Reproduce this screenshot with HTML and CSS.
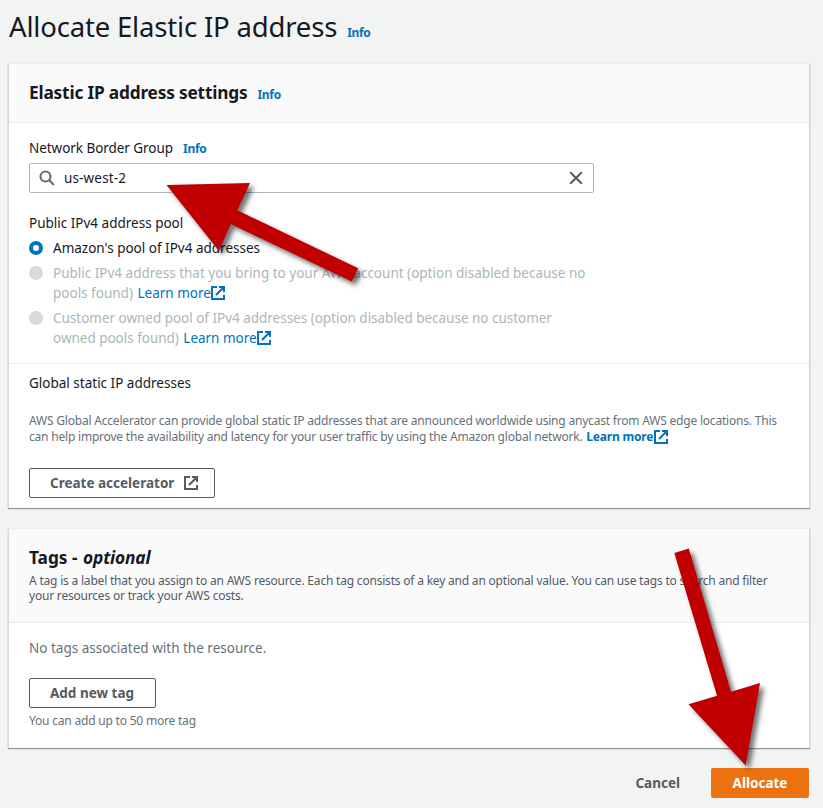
FILE: index.html
```
<!DOCTYPE html>
<html lang="en">
<head>
<meta charset="utf-8">
<title>Allocate Elastic IP address</title>
<link rel="stylesheet" href="styles.css">
</head>
<body>
<svg class="defs" width="0" height="0" aria-hidden="true">
  <symbol id="external" viewBox="0 0 14 14">
    <path d="M6 1H1v12h12V9M8 1h5v5M12.5 1.5 5 9" fill="none" stroke="currentColor" stroke-width="2"/>
  </symbol>
</svg>
<main class="page">
  <header class="page-header">
    <h1>Allocate Elastic IP address</h1><a class="info">Info</a>
  </header>

  <section class="card">
    <header class="card-header settings-header">
      <h2 class="settings-title">Elastic IP address settings</h2><a class="info">Info</a>
    </header>
    <div class="settings-body">
      <div class="field-label"><span>Network Border Group</span><a class="info">Info</a></div>
      <div class="search-box">
        <svg class="search-icon" viewBox="0 0 16 16"><circle cx="6.5" cy="6.5" r="5" /><path d="M10 10l5 5"/></svg>
        <span class="search-value">us-west-2</span>
        <svg class="clear-icon" viewBox="0 0 14 14"><path d="M1.2 1.2l11.6 11.6M12.8 1.2 1.2 12.8"/></svg>
      </div>
      <div class="pool-label">Public IPv4 address pool</div>
      <div class="radio-row"><span class="radio checked"></span><div>Amazon's pool of IPv4 addresses</div></div>
      <div class="radio-row disabled"><span class="radio"></span><div>Public IPv4 address that you bring to your AWS account (option disabled because no<br>pools found) <a class="link">Learn more<svg class="ext"><use href="#external"/></svg></a></div></div>
      <div class="radio-row disabled"><span class="radio"></span><div class="customer-pool">Customer owned pool of IPv4 addresses (option disabled because no customer<br>owned pools found) <a class="link">Learn more<svg class="ext"><use href="#external"/></svg></a></div></div>
    </div>
    <div class="global">
      <div class="global-title">Global static IP addresses</div>
      <p class="small global-text">AWS Global Accelerator can provide global static IP addresses that are announced worldwide using anycast from AWS edge locations. This<br>can help improve the availability and latency for your user traffic by using the Amazon global network. <a class="link bold">Learn more<svg class="ext"><use href="#external"/></svg></a></p>
      <button class="button accelerator"><span>Create accelerator</span><svg class="ext"><use href="#external"/></svg></button>
    </div>
  </section>

  <section class="card tags">
    <header class="card-header tags-header">
      <h2>Tags - <em>optional</em></h2>
      <p class="small tags-text">A tag is a label that you assign to an AWS resource. Each tag consists of a key and an optional value. You can use tags to search and filter<br>your resources or track your AWS costs.</p>
    </header>
    <div class="tags-body">
      <p class="no-tags">No tags associated with the resource.</p>
      <button class="button add-tag"><span>Add new tag</span></button>
      <p class="small tag-limit">You can add up to 50 more tag</p>
    </div>
  </section>

  <footer class="actions">
    <button class="cancel">Cancel</button>
    <button class="allocate">Allocate</button>
  </footer>
</main>
<svg class="arrows" viewBox="0 0 823 808" aria-hidden="true">
  <path d="M166.5 185 250 183 237.3 210.3 358.2 268.3 351.7 281.5 230.7 224 219 251Z"/>
  <path d="M674.3 553 688.8 548.6 731 691.7 760 683 745.7 765.5 688.5 704.2 717 695.7Z"/>
</svg>
</body>
</html>
```
FILE: styles.css
```
* { box-sizing: border-box; }
body {
  margin: 0;
  background: #f2f3f3;
  color: #16191f;
  font: 13.5px/20px "Noto Sans", "Open Sans", sans-serif;
}
h1, h2, p { margin: 0; }
.defs { position: absolute; }
.page { width: 823px; height: 808px; padding: 9px 13px 0 8px; overflow: hidden; white-space: nowrap; }
.page-header { display: flex; align-items: baseline; height: 55px; padding-left: 1px; }
h1 { font-size: 27.5px; line-height: 36px; font-weight: 400; letter-spacing: -0.18px; }
.info { color: #0073bb; font-size: 12px; font-weight: 700; margin-left: 10px; letter-spacing: -0.3px; }
.card {
  width: 802px;
  height: 444px;
  background: #fff;
  border-left: 1px solid #d5dbdb;
  border-right: 1px solid #d0d5d6;
  box-shadow: 0 1px 1px #879596, 0 -1px 0 #eaeded;
}
.card-header { background: #fafafa; border-bottom: 1px solid #eaeded; padding: 0 20px; }
h2 { font-size: 17.3px; line-height: 22px; font-weight: 700; }
h2 em { margin-left: 1px; letter-spacing: -0.15px; }
.settings-title { letter-spacing: -0.19px; }
.settings-header { display: flex; align-items: baseline; height: 59px; padding-top: 18px; }
.settings-body { height: 240px; padding: 15px 20px 0; }
.field-label { display: flex; align-items: baseline; height: 20px; letter-spacing: -0.05px; }
.search-box { display: flex; align-items: center; width: 565px; height: 30px; margin-top: 5px; padding: 0 10px 0 9px; border: 1px solid #aab7b8; border-radius: 2px; }
.search-icon { width: 16px; height: 16px; }
.search-icon *, .clear-icon * { fill: none; stroke: #687078; stroke-width: 2.2; }
.clear-icon * { stroke: #545b64; stroke-width: 2; }
.search-value { flex: 1; margin-left: 9px; letter-spacing: 0.15px; }
.clear-icon { width: 14px; height: 14px; }
.pool-label { margin: 20px 0 5px; }
.radio-row { display: flex; margin-bottom: 5px; }
.radio { width: 14px; height: 14px; margin: 3px 10px 0 0; border-radius: 50%; background: #d5dbdb; }
.radio.checked { background: #fff; border: 4px solid #0073bb; }
.disabled { color: #aab7b8; }
.link { color: #0073bb; margin-left: 1px; }
.link.bold { font-weight: 700; }
.customer-pool { letter-spacing: -0.02px; }
.ext { flex: none; width: 14px; height: 14px; vertical-align: -2px; margin-left: 0; }
.global { border-top: 1px solid #eaeded; padding: 9px 20px 0; }
.small { font-size: 12px; line-height: 16px; letter-spacing: -0.2px; color: #687078; }
.global-text { margin-top: 20px; }
.global-text .ext { vertical-align: -3px; margin-left: 1px; }
.button { display: flex; align-items: center; height: 30px; padding: 0 20px; border: 1px solid #545b64; border-radius: 2px; background: #fff; color: #545b64; font: inherit; font-weight: 700; }
.accelerator { width: 186px; margin-top: 23px; }
.accelerator .ext { margin-left: 10px; }
.tags { height: 219px; margin-top: 21px; }
.tags-header { height: 94px; padding-top: 18px; }
.tags-text { line-height: 15px; margin-top: 4px; color: #545b64; }
.tags-body { padding: 15px 20px 0; }
.no-tags { color: #687078; }
.add-tag { width: 127px; margin-top: 20px; }
.tag-limit { margin-top: 5px; }
.actions { display: flex; justify-content: flex-end; width: 801px; margin-top: 20px; }
.actions button { height: 30px; padding: 0 20px; border: 0; border-radius: 2px; background: none; color: #545b64; font: inherit; font-weight: 700; }
.actions .cancel { margin-right: 11px; }
.actions .allocate { width: 98px; background: #ec7211; color: #fff; }
.arrows { position: absolute; left: 0; top: 0; width: 823px; height: 808px; pointer-events: none; }
.arrows path { fill: #c00000; filter: drop-shadow(4px 4px 2.5px rgba(0, 0, 0, .55)); }
```
